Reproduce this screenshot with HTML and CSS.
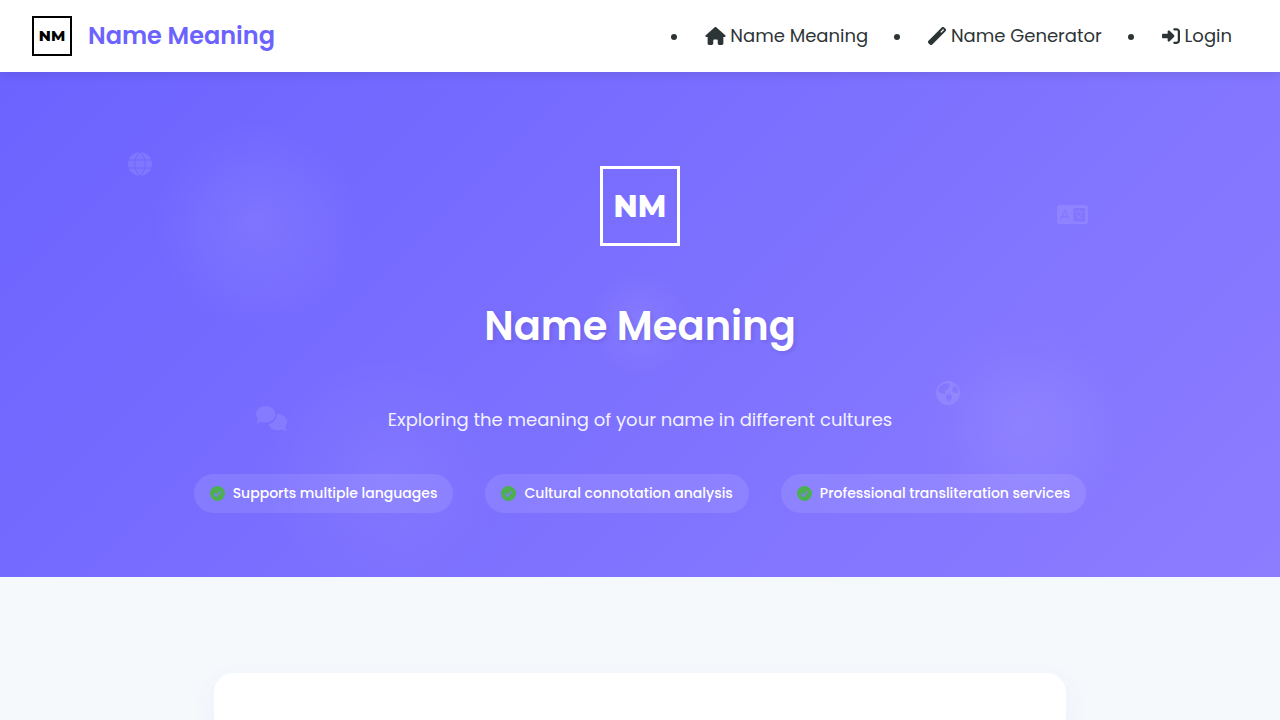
FILE: index.html
```
<!DOCTYPE html>
<html lang="en">
<head>
<meta charset="UTF-8">
<meta name="viewport" content="width=device-width, initial-scale=1.0">
<title>Name Meaning</title>
<link rel="stylesheet" href="styles.css">
</head>
<body>
	<header class="navbar">
		<a href="#" class="brand">
			<svg class="brand-logo" viewBox="0 0 40 40" aria-hidden="true">
				<rect x="1" y="1" width="38" height="38" fill="#fff" stroke="#000" stroke-width="2"/>
				<text x="20" y="25" text-anchor="middle">NM</text>
			</svg>
			<span>Name Meaning</span>
		</a>
		<nav>
			<ul class="nav-links">
				<li><a href="#">
					<svg class="nav-icon home" viewBox="0 0 576 512"><path d="M575.800 255.500c0 18-15 32.100-32 32.100h-32l.7 160.200c0 2.700-.2 5.400-.5 8.100V472c0 22.100-17.900 40-40 40H392c-22.100 0-40-17.900-40-40v-88c0-17.700-14.300-32-32-32h-64c-17.700 0-32 14.300-32 32v88c0 22.100-17.900 40-40 40h-80c-22.100 0-40-17.900-40-40V287.600H32c-18 0-32-14-32-32.100 0-9 3-17 10-24L266.400 8c7-7 15-8 22-8s15 2 21 7l255.400 224.500c8 7 12 15 11 24z"/></svg>
					Name Meaning</a></li>
				<li><a href="#">
					<svg class="nav-icon" viewBox="0 0 512 512"><path fill-rule="evenodd" d="M14 390 390 14a50 50 0 0 1 71 0l37 37a50 50 0 0 1 0 71L122 498a50 50 0 0 1-71 0l-37-37a50 50 0 0 1 0-71zM350 142l24 24 82-82-24-24z"/></svg>
					Name Generator</a></li>
				<li><a href="#">
					<svg class="nav-icon" viewBox="0 0 512 512"><path d="M217.900 105.900 340.700 228.700c7.200 7.200 11.300 17.100 11.300 27.300s-4.100 20.100-11.300 27.300L217.900 406.100c-6.400 6.400-15 9.900-24 9.900-18.700 0-33.900-15.200-33.900-33.900V320H32c-17.700 0-32-14.300-32-32v-64c0-17.700 14.300-32 32-32h128v-62.100c0-18.700 15.200-33.900 33.900-33.900 9 0 17.600 3.600 24 9.900zM352 416h64c17.700 0 32-14.300 32-32V128c0-17.700-14.300-32-32-32h-64c-17.700 0-32-14.300-32-32s14.300-32 32-32h64c53 0 96 43 96 96v256c0 53-43 96-96 96h-64c-17.700 0-32-14.300-32-32s14.300-32 32-32z"/></svg>
					Login</a></li>
			</ul>
		</nav>
	</header>

	<section class="hero">
		<!-- floating background icons -->
		<div class="float-icons" aria-hidden="true">
			<svg class="float-icon globe" viewBox="0 0 24 24"><circle cx="12" cy="12" r="12"/><path class="cut" d="M0 8h24M0 16h24M12 0C5 6 5 18 12 24M12 0c7 6 7 18 0 24"/></svg>
			<svg class="float-icon lang" viewBox="0 0 32 20"><path fill-rule="evenodd" d="M3 0h26a3 3 0 0 1 3 3v14a3 3 0 0 1-3 3H3a3 3 0 0 1-3-3V3a3 3 0 0 1 3-3zm14 3v14h12V3z"/><path class="cut" d="M4 15 8 5l4 10M5.500 12h5"/><path class="line" d="M19 7h8M23 5v2M26 7c-1 4-3 6-6 7M20 9c1 3 3 4 6 5"/></svg>
			<svg class="float-icon chat" viewBox="0 0 32 26"><path d="M10 0c6 0 10 4 10 8.500S16 17 10 17c-2 0-3 0-5-1-1 1-3 2-5 2 1-1 2-3 2-5C1 12 0 10 0 8.500 0 4 4 0 10 0z"/><path d="M21.500 8c6 0 10.500 4 10.500 8.500 0 2-1 4-2 5.500 0 1 1 3 2 4-2 0-4-1-5-2-2 1-3 1-5 1-5 0-8-3-9-6.500 5-1 9-5 8.500-10.500z"/></svg>
			<svg class="float-icon earth" viewBox="0 0 24 24"><path fill-rule="evenodd" d="M12 0a12 12 0 1 1 0 24 12 12 0 0 1 0-24zM4 5 2 9l3 3 4 1v-3l3-2 2-3-2-3-4 1zm13 1-1 4 3 2 3 0 0-3-2-4zM10 14l0 3 2 4 3-2 1-4-2-2z"/></svg>
		</div>

		<div class="hero-content">
			<svg class="hero-logo" viewBox="0 0 80 80" aria-hidden="true">
				<rect x="1.500" y="1.500" width="77" height="77" fill="none" stroke="#fff" stroke-width="3"/>
				<text x="40" y="51" text-anchor="middle">NM</text>
			</svg>
			<h1>Name Meaning</h1>
			<p class="subtitle">Exploring the meaning of your name in different cultures</p>
			<ul class="features">
				<li><svg class="check" viewBox="0 0 16 16"><circle cx="8" cy="8" r="8"/><path d="M4.500 8.200 7 10.700l4.500-4.900"/></svg>Supports multiple languages</li>
				<li><svg class="check" viewBox="0 0 16 16"><circle cx="8" cy="8" r="8"/><path d="M4.500 8.200 7 10.700l4.500-4.900"/></svg>Cultural connotation analysis</li>
				<li><svg class="check" viewBox="0 0 16 16"><circle cx="8" cy="8" r="8"/><path d="M4.500 8.200 7 10.700l4.500-4.900"/></svg>Professional transliteration services</li>
			</ul>
		</div>
	</section>

	<main class="container">
		<div class="card"></div>
	</main>
</body>
</html>
```
FILE: styles.css
```
*{margin: 0; padding: 0; box-sizing: border-box;}

body{
	font-family: Poppins, Inter, "Liberation Sans", sans-serif;
	line-height: 24px;
	color: #2d3436;
	background: #f5f9fc;
}
a{text-decoration: none; color: inherit;}

/* navbar */
.navbar{
	position: relative;
	z-index: 2;
	display: flex;
	justify-content: space-between;
	align-items: center;
	padding: 16px 32px;
	background: #fff;
	box-shadow: 0 2px 10px rgba(0,0,0,.1);
}
.brand{
	display: flex;
	align-items: center;
	gap: 16px;
	font-size: 24px;
	font-weight: 600;
	color: #6c63ff;
}
.brand-logo{width: 40px; height: 40px;}
.brand-logo text{
	font-family: Montserrat, Poppins, sans-serif;
	font-size: 15px;
	font-weight: 800;
	fill: #000;
}
.nav-links{
	display: flex;
	gap: 28px;
	font-size: 16px;
}
.nav-links a{
	padding: 8px 16px;
	font-size: 18px;
}
.nav-icon{
	width: 18px;
	height: 18px;
	fill: #2d3436;
	vertical-align: -3px;
}
.home{width: 21px;}

/* hero */
.hero{
	position: relative;
	padding: 94px 32px 64px;
	color: #fff;
	text-align: center;
	background:
		radial-gradient(circle at 20% 30%, rgba(255,255,255,.08), transparent 104px),
		radial-gradient(circle at 80% 70%, rgba(255,255,255,.08), transparent 104px),
		radial-gradient(circle at 50% 50%, rgba(255,255,255,.08), transparent 52px),
		radial-gradient(circle at 30% 80%, rgba(255,255,255,.06), transparent 120px),
		linear-gradient(135deg, #6c63ff, #8c7dff);
}
.hero-logo{
	display: block;
	width: 80px;
	height: 80px;
	margin: 0 auto 48px;
}
.hero-logo text{
	font-family: Montserrat, Poppins, sans-serif;
	font-size: 30px;
	font-weight: 800;
	fill: #fff;
}
.hero h1{
	margin-bottom: 48px;
	font-size: 40px;
	line-height: 64px;
	font-weight: 600;
	text-shadow: 2px 2px 4px rgba(0,0,0,.1);
}
.subtitle{
	margin-bottom: 40px;
	font-size: 18px;
	line-height: 28px;
	opacity: .9;
}
.features{
	display: flex;
	flex-wrap: wrap;
	justify-content: center;
	gap: 32px;
	list-style: none;
}
.features li{
	display: flex;
	align-items: center;
	gap: 8px;
	padding: 8px 16px;
	font-size: 14px;
	font-weight: 500;
	line-height: 23px;
	background: rgba(255,255,255,.1);
	border-radius: 20px;
}
.check{width: 15px; height: 15px; fill: #4caf50;}
.check path{fill: none; stroke: #7c83e0; stroke-width: 2;}

/* background icons */
.float-icon{
	position: absolute;
	fill: #fff;
	opacity: .1;
}
.globe{left: 10%; top: 80px; width: 24px;}
.lang{right: 15%; top: 133px; width: 31px;}
.chat{left: 20%; bottom: 146px; width: 31px;}
.earth{right: 25%; bottom: 172px; width: 24px;}
.cut{fill: none; stroke: #7068ff; stroke-width: 1;}
.line{fill: none; stroke: #fff; stroke-width: 1;}

/* content */
.container{
	max-width: 900px;
	margin: 0 auto;
	padding: 96px 24px;
}
.card{
	min-height: 320px;
	background: #fff;
	border-radius: 20px;
	box-shadow: 0 8px 24px rgba(108,99,255,.06);
}
```
